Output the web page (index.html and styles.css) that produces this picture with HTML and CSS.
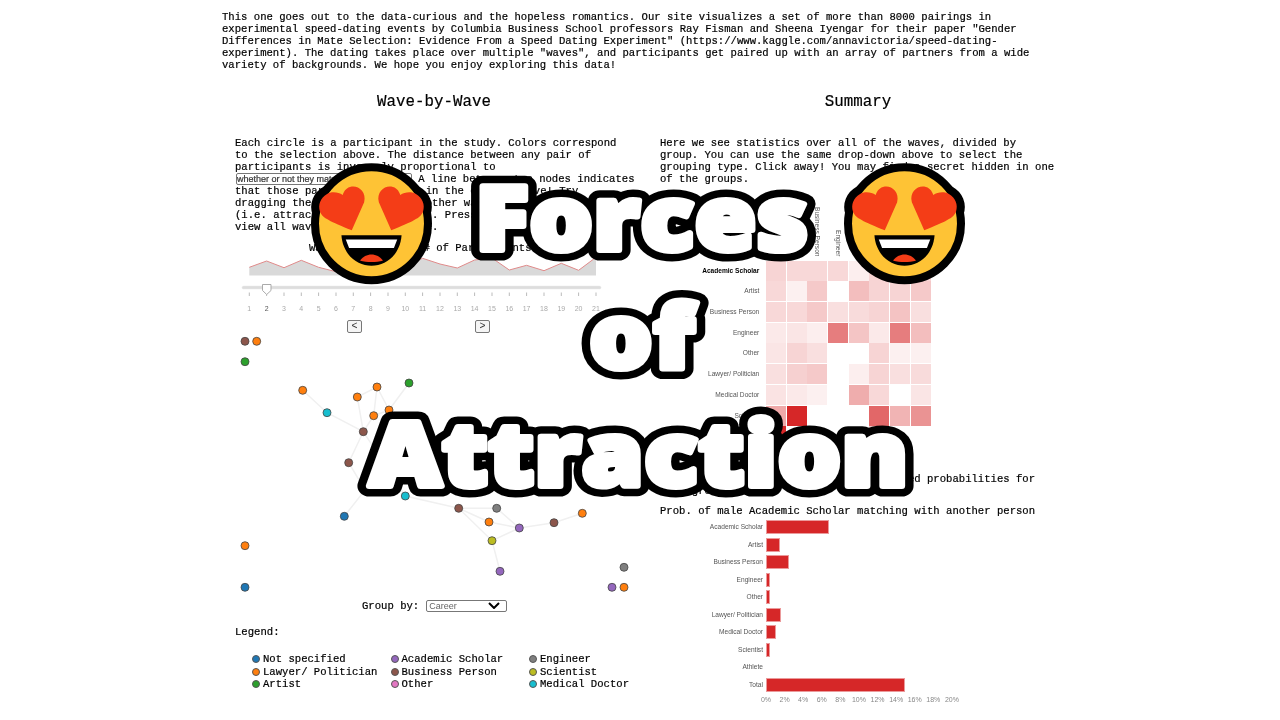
FILE: index.html
```html
<!DOCTYPE html>
<html lang="en">
<head>
<meta charset="utf-8">
<title>Forces of Attraction</title>
<link rel="stylesheet" href="styles.css">
</head>
<body>
<svg class="defs" width="0" height="0" aria-hidden="true">
  <symbol id="emoji" viewBox="33 25 362 364">
    <g class="e-out">
      <path d="M155 226L192 142C200 110 175 92 155 95C140 97 132 108 128 120C115 112 95 108 80 118C62 128 53 150 60 170C68 190 90 198 155 226Z"/>
      <path d="M273 226L236 142C228 110 253 92 273 95C288 97 296 108 300 120C313 112 333 108 348 118C366 128 375 150 368 170C360 190 338 198 273 226Z"/>
    </g>
    <circle class="e-face" cx="214" cy="206" r="169"/>
    <path class="e-heart" d="M155 226L192 142C200 110 175 92 155 95C140 97 132 108 128 120C115 112 95 108 80 118C62 128 53 150 60 170C68 190 90 198 155 226Z"/>
    <path class="e-heart" d="M273 226L236 142C228 110 253 92 273 95C288 97 296 108 300 120C313 112 333 108 348 118C366 128 375 150 368 170C360 190 338 198 273 226Z"/>
    <path class="e-mouth" d="M124 241H304C300 298 258 332 214 332C170 332 128 298 124 241Z"/>
    <path class="e-teeth" d="M137 253H291L281 279H147Z"/>
    <path class="e-heart" d="M180 317C195 292 233 292 248 317C228 322 200 322 180 317Z"/>
  </symbol>
</svg>

<main class="page">
  <p class="intro">This one goes out to the data-curious and the hopeless romantics. Our site visualizes a set of more than 8000 pairings in<br>experimental speed-dating events by Columbia Business School professors Ray Fisman and Sheena Iyengar for their paper "Gender<br>Differences in Mate Selection: Evidence From a Speed Dating Experiment" (https://www.kaggle.com/annavictoria/speed-dating-<br>experiment). The dating takes place over multiple "waves", and participants get paired up with an array of partners from a wide<br>variety of backgrounds. We hope you enjoy exploring this data!</p>

  <div class="columns">
    <section class="col col-left">
      <h2>Wave-by-Wave</h2>
      <p class="copy">Each circle is a participant in the study. Colors correspond<br>to the selection above. The distance between any pair of<br>participants is inversely proportional to<br><select class="inline-select"><option>whether or not they matched</option></select> A line between two nodes indicates<br>that those participants match in the current wave! Try<br>dragging the nodes to see the other wave's "springs"<br>(i.e. attraction) of the study). Press the arrows to<br>view all waves at your own pace.</p>
      <p class="chart-title">Wave-by-Wave Size # of Participants</p>

      <svg class="wave" viewBox="235 255 398 62" width="398" height="62">
        <path class="area" d="M249.3 275.5V267.3L266.6 261L284 267.7L301.3 260.3L318.6 267.3L336 271.7L353.3 268L370.6 266L388 263L405.3 266L422.6 258.3L440 264L457.3 268L474.6 260L492 258L509.3 270L526.6 265.3L544 270.7L561.3 263.3L578.6 270.3L596 257.3V275.5Z"/>
        <path class="line" d="M249.3 267.3L266.6 261L284 267.7L301.3 260.3L318.6 267.3L336 271.7L353.3 268L370.6 266L388 263L405.3 266L422.6 258.3L440 264L457.3 268L474.6 260L492 258L509.3 270L526.6 265.3L544 270.7L561.3 263.3L578.6 270.3L596 257.3"/>
        <rect class="rail" x="242" y="286" width="359" height="3" rx="1.5"/>
        <path class="ticks" d="M249.3 292.5v3.5M266.6 292.5v3.5M284 292.5v3.5M301.3 292.5v3.5M318.6 292.5v3.5M336 292.5v3.5M353.3 292.5v3.5M370.6 292.5v3.5M388 292.5v3.5M405.3 292.5v3.5M422.6 292.5v3.5M440 292.5v3.5M457.3 292.5v3.5M474.6 292.5v3.5M492 292.5v3.5M509.3 292.5v3.5M526.6 292.5v3.5M544 292.5v3.5M561.3 292.5v3.5M578.6 292.5v3.5M596 292.5v3.5"/>
        <path class="handle" d="M262.5 284.5H271V290.5L266.7 294.5L262.5 290.5Z"/>
        <g class="wave-nums">
          <text x="249.3" y="311">1</text><text class="on" x="266.6" y="311">2</text><text x="284" y="311">3</text><text x="301.3" y="311">4</text><text x="318.6" y="311">5</text><text x="336" y="311">6</text><text x="353.3" y="311">7</text><text x="370.6" y="311">8</text><text x="388" y="311">9</text><text x="405.3" y="311">10</text><text x="422.6" y="311">11</text><text x="440" y="311">12</text><text x="457.3" y="311">13</text><text x="474.6" y="311">14</text><text x="492" y="311">15</text><text x="509.3" y="311">16</text><text x="526.6" y="311">17</text><text x="544" y="311">18</text><text x="561.3" y="311">19</text><text x="578.6" y="311">20</text><text x="596" y="311">21</text>
        </g>
      </svg>

      <div class="wave-nav"><button>&lt;</button><button>&gt;</button></div>

      <svg class="network" viewBox="235 335 398 260" width="398" height="260">
        <path class="edges" d="M302.7 390.3L327 412.7L363.3 431.7L357.3 397L377 387L389 410M377 387L373.7 415.7L363.3 431.7M409 383L389 410L373.7 415.7M363.3 431.7L348.7 462.7L365 490L344.3 516.3M363.3 431.7L405.3 496L458.7 508.3L496.7 508.3L519.3 528L554 522.7L582.3 513.3M458.7 508.3L492 540.7L519.3 528L489 522L458.7 508.3M492 540.7L500 571.3"/>
        <circle class="brown" cx="245" cy="341.3" r="4"/><circle class="orange" cx="256.7" cy="341.3" r="4"/><circle class="green" cx="245" cy="361.7" r="4"/>
        <circle class="orange" cx="302.7" cy="390.3" r="4"/><circle class="cyan" cx="327" cy="412.7" r="4"/><circle class="orange" cx="357.3" cy="397" r="4"/><circle class="orange" cx="377" cy="387" r="4"/><circle class="green" cx="409" cy="383" r="4"/><circle class="orange" cx="389" cy="410" r="4"/><circle class="orange" cx="373.7" cy="415.7" r="4"/><circle class="brown" cx="363.3" cy="431.7" r="4"/><circle class="brown" cx="348.7" cy="462.7" r="4"/><circle class="brown" cx="365" cy="490" r="4"/><circle class="cyan" cx="405.3" cy="496" r="4"/><circle class="blue" cx="344.3" cy="516.3" r="4"/>
        <circle class="brown" cx="458.7" cy="508.3" r="4"/><circle class="gray" cx="496.7" cy="508.3" r="4"/><circle class="orange" cx="489" cy="522" r="4"/><circle class="purple" cx="519.3" cy="528" r="4"/><circle class="brown" cx="554" cy="522.7" r="4"/><circle class="orange" cx="582.3" cy="513.3" r="4"/><circle class="olive" cx="492" cy="540.7" r="4"/><circle class="purple" cx="500" cy="571.3" r="4"/>
        <circle class="orange" cx="245" cy="545.7" r="4"/><circle class="blue" cx="245" cy="587.3" r="4"/><circle class="gray" cx="624" cy="567.3" r="4"/><circle class="purple" cx="612" cy="587.3" r="4"/><circle class="orange" cx="624" cy="587.3" r="4"/>
      </svg>

      <div class="group-by"><label>Group by:</label>
        <span class="career-wrap"><select class="career"><option>Career</option></select>
        <svg class="chevron" viewBox="0 0 12 7" width="12" height="7"><path d="M1 1L6 6L11 1"/></svg></span>
      </div>

      <p class="legend-title">Legend:</p>
      <ul class="legend">
        <li><i class="blue"></i>Not specified</li><li><i class="purple"></i>Academic Scholar</li><li><i class="gray"></i>Engineer</li>
        <li><i class="orange"></i>Lawyer/ Politician</li><li><i class="brown"></i>Business Person</li><li><i class="olive"></i>Scientist</li>
        <li><i class="green"></i>Artist</li><li><i class="pink"></i>Other</li><li><i class="cyan"></i>Medical Doctor</li>
      </ul>
    </section>

    <section class="col col-right">
      <h2>Summary</h2>
      <p class="copy">Here we see statistics over all of the waves, divided by<br>group. You can use the same drop-down above to select the<br>grouping type. Click away! You may find a secret hidden in one<br>of the groups.</p>

      <div class="heat">
        <span></span>
        <span class="top">Academic Scholar</span><span class="top">Artist</span><span class="top">Business Person</span><span class="top">Engineer</span><span class="top">Other</span><span class="top">Lawyer/ Politician</span><span class="top">Medical Doctor</span><span class="top">Scientist</span>

        <span class="lab sel">Academic Scholar</span><b style="opacity:.2"></b><b style="opacity:.18"></b><b style="opacity:.18"></b><b style="opacity:.18"></b><b style="opacity:.08"></b><b style="opacity:.2"></b><b style="opacity:.2"></b><b style="opacity:.2"></b>
        <span class="lab">Artist</span><b style="opacity:.18"></b><b style="opacity:.07"></b><b style="opacity:.25"></b><b style="opacity:0"></b><b style="opacity:.3"></b><b style="opacity:.2"></b><b style="opacity:.2"></b><b style="opacity:.25"></b>
        <span class="lab">Business Person</span><b style="opacity:.18"></b><b style="opacity:.18"></b><b style="opacity:.25"></b><b style="opacity:.15"></b><b style="opacity:.17"></b><b style="opacity:.2"></b><b style="opacity:.28"></b><b style="opacity:.15"></b>
        <span class="lab">Engineer</span><b style="opacity:.1"></b><b style="opacity:.12"></b><b style="opacity:.08"></b><b style="opacity:.6"></b><b style="opacity:.27"></b><b style="opacity:.1"></b><b style="opacity:.6"></b><b style="opacity:.3"></b>
        <span class="lab">Other</span><b style="opacity:.12"></b><b style="opacity:.2"></b><b style="opacity:.15"></b><b style="opacity:0"></b><b style="opacity:0"></b><b style="opacity:.2"></b><b style="opacity:.07"></b><b style="opacity:.07"></b>
        <span class="lab">Lawyer/ Politician</span><b style="opacity:.15"></b><b style="opacity:.22"></b><b style="opacity:.25"></b><b style="opacity:0"></b><b style="opacity:.08"></b><b style="opacity:.2"></b><b style="opacity:.15"></b><b style="opacity:.17"></b>
        <span class="lab">Medical Doctor</span><b style="opacity:.13"></b><b style="opacity:.1"></b><b style="opacity:.07"></b><b style="opacity:0"></b><b style="opacity:.38"></b><b style="opacity:.18"></b><b style="opacity:0"></b><b style="opacity:.12"></b>
        <span class="lab">Scientist</span><b style="opacity:.4"></b><b style="opacity:1"></b><b style="opacity:0"></b><b style="opacity:0"></b><b style="opacity:0"></b><b style="opacity:.7"></b><b style="opacity:.35"></b><b style="opacity:.5"></b>
        <span class="lab">Athlete</span><b style="opacity:1"></b><b style="opacity:0"></b><b style="opacity:0"></b><b style="opacity:0"></b><b style="opacity:0"></b><b style="opacity:.25"></b><b style="opacity:0"></b><b style="opacity:0"></b>
      </div>

      <p class="copy detail">Click on a group above to see the related probabilities for<br>each group.</p>
      <p class="copy bars-title">Prob. of male Academic Scholar matching with another person</p>

      <div class="bars">
        <span class="lab">Academic Scholar</span><div class="track"><b style="width:63px"></b></div>
        <span class="lab">Artist</span><div class="track"><b style="width:14px"></b></div>
        <span class="lab">Business Person</span><div class="track"><b style="width:23px"></b></div>
        <span class="lab">Engineer</span><div class="track"><b style="width:4px"></b></div>
        <span class="lab">Other</span><div class="track"><b style="width:4px"></b></div>
        <span class="lab">Lawyer/ Politician</span><div class="track"><b style="width:14.7px"></b></div>
        <span class="lab">Medical Doctor</span><div class="track"><b style="width:9.7px"></b></div>
        <span class="lab">Scientist</span><div class="track"><b style="width:4px"></b></div>
        <span class="lab">Athlete</span><div class="track"></div>
        <span class="lab">Total</span><div class="track"><b style="width:139px"></b></div>
      </div>
      <div class="axis"><span>0%</span><span>2%</span><span>4%</span><span>6%</span><span>8%</span><span>10%</span><span>12%</span><span>14%</span><span>16%</span><span>18%</span><span>20%</span></div>
    </section>
  </div>
</main>

<div class="title">
  <div class="title-row first">
    <svg class="emoji"><use href="#emoji"/></svg>
    <svg class="word" viewBox="0 0 340 118"><use class="halo" href="#t-forces"/><g class="face"><text id="t-forces" x="170" y="90">Forces</text></g></svg>
    <svg class="emoji"><use href="#emoji"/></svg>
  </div>
  <div class="title-row"><svg class="word w-of" viewBox="0 0 340 118"><use class="halo" href="#t-of"/><g class="face"><text id="t-of" x="170" y="90">of</text></g></svg></div>
  <div class="title-row"><svg class="word w-long" viewBox="0 0 560 118"><use class="halo" href="#t-attr"/><g class="face"><text id="t-attr" x="280" y="90">Attraction</text></g></svg></div>
</div>
</body>
</html>
```

FILE: styles.css
```css
* { box-sizing: border-box; }
html, body { margin: 0; height: 720px; overflow: hidden; background: #fff; }
body { position: relative; font-family: "Liberation Mono", monospace; color: #000; }
.defs { position: absolute; }

.page {
  padding: 11px 0 0 222px;
  width: 1070px;
  font-size: 10.6px;
  line-height: 12px;
  filter: blur(.4px);
}
p { margin: 0; }
.intro, .copy, .chart-title, .group-by label, .legend-title, .legend { -webkit-text-stroke: .2px #000; }
.intro { white-space: nowrap; }

.columns { display: flex; margin-top: 22px; }
.col { width: 424px; flex: none; }
.col-left { padding-left: 13px; }
.col-right { padding-left: 14px; }
h2 {
  margin: 0 0 26px -13px;
  height: 18px;
  font-size: 15.8px;
  line-height: 18px;
  font-weight: 400;
  text-align: center;
  -webkit-text-stroke: .2px #000;
}
.col-right h2 { margin-left: -14px; }
.copy { white-space: nowrap; }

.inline-select {
  width: 176px;
  height: 12px;
  padding: 0;
  margin: 0 0 0 1px;
  font: 9px/10px "Liberation Sans", sans-serif;
  color: #555;
  background: #fff;
  border: 1px solid #777;
  border-radius: 2px;
  appearance: none;
  vertical-align: top;
}

.chart-title { margin-top: 9px; margin-left: 74px; white-space: nowrap; }
.wave { display: block; margin-top: 1px; }
.area { fill: #d9d9d9; }
.line { fill: none; stroke: #e08a8a; stroke-width: 1; }
.rail { fill: #ddd; stroke: #e8e8e8; stroke-width: .5; }
.ticks { stroke: #bbb; stroke-width: 1; fill: none; }
.handle { fill: #fff; stroke: #aaa; stroke-width: 1; }
.wave-nums text { font: 7px "Liberation Sans", sans-serif; fill: #aaa; text-anchor: middle; }
.wave-nums .on { fill: #555; }

.wave-nav { display: flex; gap: 113px; height: 18px; padding: 3px 0 0 112px; }
.wave-nav button {
  width: 15px;
  height: 13px;
  padding: 0;
  font: 10px/10px "Liberation Mono", monospace;
  color: #333;
  background: #f5f5f5;
  border: 1px solid #777;
  border-radius: 2px;
}

.network { display: block; }
.edges { fill: none; stroke: #f0f0f0; stroke-width: 1.5; }
.network circle { stroke: #444; stroke-width: .8; }
.blue { fill: #1f77b4; background: #1f77b4; }
.orange { fill: #ff7f0e; background: #ff7f0e; }
.green { fill: #2ca02c; background: #2ca02c; }
.purple { fill: #9467bd; background: #9467bd; }
.brown { fill: #8c564b; background: #8c564b; }
.pink { fill: #e377c2; background: #e377c2; }
.gray { fill: #7f7f7f; background: #7f7f7f; }
.olive { fill: #bcbd22; background: #bcbd22; }
.cyan { fill: #17becf; background: #17becf; }

.group-by { display: flex; align-items: center; gap: 7px; height: 12px; margin-top: 5px; padding-left: 127px; }
.career-wrap { position: relative; display: block; width: 81px; height: 12px; }
.career {
  display: block;
  width: 81px;
  height: 12px;
  padding: 0 0 0 2px;
  font: 9px/10px "Liberation Sans", sans-serif;
  color: #666;
  background: #fff;
  border: 1px solid #777;
  border-radius: 2px;
  appearance: none;
}
.chevron { position: absolute; right: 7px; top: 2px; }
.chevron path { fill: none; stroke: #000; stroke-width: 2; }

.legend-title { margin-top: 14px; }
.legend {
  display: grid;
  grid-template-columns: repeat(3, 138.5px);
  grid-auto-rows: 12.5px;
  list-style: none;
  margin: 15px 0 0 17px;
  padding: 0;
  white-space: nowrap;
}
.legend li { display: flex; align-items: center; gap: 3px; }
.legend i { width: 8px; height: 8px; border-radius: 50%; border: 1px solid #555; flex: none; -webkit-text-stroke: 0; }

.heat {
  display: grid;
  grid-template-columns: 105.3px repeat(8, 20px);
  grid-template-rows: 56px repeat(9, 20px);
  column-gap: .7px;
  row-gap: .7px;
  margin-top: 19px;
  font: 6.6px/8px "Liberation Sans", sans-serif;
  color: #555;
}
.heat .top {
  writing-mode: vertical-rl;
  justify-self: center;
  align-self: end;
  padding-bottom: 4px;
  white-space: nowrap;
}
.lab { text-align: right; padding-right: 6px; white-space: nowrap; align-self: center; font: 6.6px/8px "Liberation Sans", sans-serif; color: #555; }
.lab.sel { font-weight: 700; color: #000; }
.heat b { background: #d62728; }

.detail { margin-top: 27px; }
.bars-title { margin-top: 8px; }
.bars {
  display: grid;
  grid-template-columns: 106px 1fr;
  grid-auto-rows: 17.5px;
  margin-top: 1.5px;
  width: 320px;
}
.bars .lab { padding-right: 3px; }
.track { display: flex; align-items: center; }
.track b { display: block; height: 14px; background: #d62728; border: 1px solid #eb9a9b; }
.axis { display: flex; margin: 2.5px 0 0 96.7px; font: 7px/8px "Liberation Sans", sans-serif; color: #888; }
.axis span { width: 18.6px; text-align: center; flex: none; }

.title {
  position: absolute;
  inset: 0;
  display: flex;
  flex-direction: column;
  align-items: center;
  padding-top: 160px;
}
.title-row { display: flex; align-items: center; justify-content: center; height: 118px; }
.title-row.first { padding-right: 4px; }
.word { width: 340px; height: 118px; overflow: visible; flex: none; font: 800 88px "Open Sans", sans-serif; text-anchor: middle; transform: scaleX(1.13); letter-spacing: .5px; }
.word.w-long { width: 560px; margin-right: 3px; }
.word.w-of { margin-left: 4px; }
.first .word { margin: 0 32px 0 40px; }
.face { fill: #fff; stroke: #fff; stroke-width: 6; stroke-linejoin: round; }
.halo { fill: #000; stroke: #000; stroke-width: 21; stroke-linejoin: round; }
.emoji { width: 121px; height: 122px; flex: none; align-self: flex-start; margin-top: 3px; }
.e-out path { fill: #000; stroke: #000; stroke-width: 48; stroke-linejoin: round; }
.e-face { fill: #fec335; stroke: #000; stroke-width: 24; }
.e-heart { fill: #f43d17; }
.e-mouth { fill: #000; }
.e-teeth { fill: #fff; }
```
